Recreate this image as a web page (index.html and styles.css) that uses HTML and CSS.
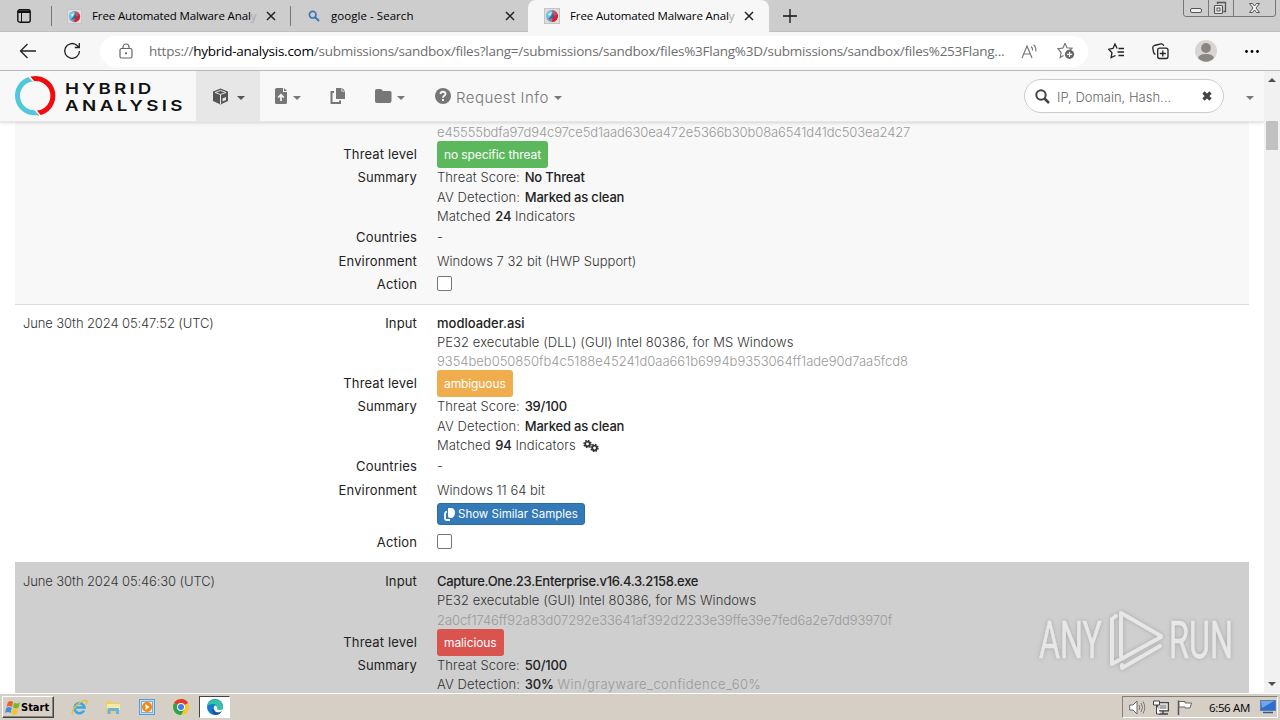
FILE: index.html
```html
<!DOCTYPE html>
<html lang="en">
<head>
    <meta charset="UTF-8">
    <meta name="viewport" content="width=device-width, initial-scale=1.0">
    <title>Free Automated Malware Analysis Service</title>
    <link rel="stylesheet" href="styles.css">
</head>
<body>

<svg class="defs" width="0" height="0">
    <defs>
        <linearGradient id="fade" x1="0" y1="0" x2="1" y2="0">
            <stop offset="0" stop-color="#58b9e8"/>
            <stop offset="1" stop-color="#e0303e"/>
        </linearGradient>
        <symbol id="favicon" viewBox="0 0 16 16">
            <rect x=".5" y=".5" width="15" height="15" fill="#dedede" stroke="#c4c4c4"/>
            <circle cx="8" cy="8" r="6" fill="url(#fade)"/>
            <path d="M8 2a6 6 0 0 0-5.500 8l5-1z" fill="#6fc6e4"/>
            <path d="M8 14a6 6 0 0 0 5.500-8l-5 3z" fill="#d6212f"/>
            <path d="M4.500 11.500L9 5l1.500 4z" fill="#31679d"/>
            <path d="M4 6l4-2-2 4z" fill="#fff" opacity=".8"/>
        </symbol>
        <symbol id="close" viewBox="0 0 10 10">
            <path d="M1 1l8 8M9 1L1 9" stroke="#222" stroke-width="1.500"/>
        </symbol>
        <symbol id="copy" viewBox="0 0 16 16">
            <path d="M6 0h5.500v3.500H15V11H6zM12.300 0L15 2.700h-2.700z" fill="currentColor"/>
            <path d="M4 4H1.500v11H10v-2.500" fill="none" stroke="currentColor" stroke-width="2"/>
        </symbol>
        <symbol id="caret" viewBox="0 0 8 4">
            <path d="M0 0h8L4 4z" fill="currentColor"/>
        </symbol>
    </defs>
</svg>

<div class="screen">
    <div class="tabs">
        <svg class="workspace" width="14" height="14" viewBox="0 0 14 14"><rect x=".8" y=".8" width="12.400" height="12.400" rx="2" fill="none" stroke="#111" stroke-width="1.400"/><path d="M1 1.500h12v2.500H1z" fill="#111"/><path d="M4.500 4v9" stroke="#111"/></svg>
        <div class="tab first">
            <svg class="fav" width="15" height="15"><use href="#favicon"/></svg>
            <span class="tab-title">Free Automated Malware Anal<i>y</i></span>
            <svg class="x" width="10" height="10"><use href="#close"/></svg>
        </div>
        <div class="tab second">
            <svg class="fav" width="12" height="12" viewBox="0 0 12 12"><circle cx="4.700" cy="4.700" r="3.300" fill="none" stroke="#3f76b5" stroke-width="1.700"/><path d="M7.200 7.200L11 11" stroke="#3f76b5" stroke-width="2"/></svg>
            <span class="tab-title search-title">google - Search</span>
            <svg class="x" width="10" height="10"><use href="#close"/></svg>
        </div>
        <div class="tab active">
            <svg class="fav" width="16" height="16"><use href="#favicon"/></svg>
            <span class="tab-title">Free Automated Malware Anal<i>y</i></span>
            <svg class="x" width="10" height="10"><use href="#close"/></svg>
        </div>
        <svg class="plus" width="14" height="14" viewBox="0 0 14 14"><path d="M7 0v14M0 7h14" stroke="#111" stroke-width="1.300"/></svg>
        <svg class="window-buttons" width="94" height="18" viewBox="0 0 94 18">
            <path d="M.5 0v14q0 2.500 2.500 2.500h87q2.500 0 2.500-2.500V0M25.500 0v16M50.500 0v16" fill="none" stroke="#777"/>
            <rect x="7.500" y="8.500" width="11" height="4" rx="1.500" fill="#eee" stroke="#555"/>
            <path d="M34.500 4V2.500h8v9h-2" fill="none" stroke="#555" stroke-width="1.300"/>
            <rect x="31.500" y="5.500" width="8" height="8" rx="1" fill="#eee" stroke="#555" stroke-width="1.200"/>
            <rect x="34" y="8" width="3" height="3" fill="none" stroke="#555"/>
            <path d="M66.500 3.500h3l2 2.500 2-2.500h3L73 8l3.500 4.500h-3l-2-2.500-2 2.500h-3L70 8z" fill="#f2f2f2" stroke="#555"/>
        </svg>
    </div>

    <div class="toolbar">
        <svg class="back" width="18" height="16" viewBox="0 0 18 16"><path d="M8.500 1L1.500 8l7 7M1.500 8H17" fill="none" stroke="#222" stroke-width="1.300"/></svg>
        <svg class="reload" width="18" height="18" viewBox="0 0 18 18"><path d="M16.500 9A7.400 7.400 0 1 1 13.500 3L16 5.200M16.300 1v4.500h-4.500" fill="none" stroke="#222" stroke-width="1.300"/></svg>
        <div class="address">
            <svg class="lock" width="14" height="16" viewBox="0 0 14 16"><rect x="1" y="5.500" width="12" height="9.500" rx="1.500" fill="none" stroke="#666" stroke-width="1.200"/><path d="M4 5.500V4a3 3 0 0 1 6 0v1.500" fill="none" stroke="#666" stroke-width="1.200"/><circle cx="7" cy="10.300" r="1.100" fill="#666"/></svg>
            <span class="url">https://<b>hybrid-analysis.com</b>/submissions/sandbox/files?lang=/submissions/sandbox/files%3Flang%3D/submissions/sandbox/files%253Flang...</span>
            <svg class="read" width="17" height="15" viewBox="0 0 17 15"><path d="M1 14L6 2l5 12M3 10h6M10 2.500q2 1.500 1.500 4M12.500.8q3 2.500 2.300 6.500" fill="none" stroke="#777" stroke-width="1.200"/></svg>
            <svg class="star" width="18" height="18" viewBox="0 0 18 18"><path d="M8 1.300l2 4.500 5 .5-3.700 3.500M6.500 13.500l-3.300 2 .9-5L1 6.800l5-.8 2-4.700" fill="none" stroke="#777" stroke-width="1.200"/><circle cx="12.500" cy="12.300" r="4.600" fill="#666"/><path d="M12.500 9.700v5.200M9.900 12.300h5.200" stroke="#fff" stroke-width="1.200"/></svg>
        </div>
        <svg class="favorites" width="17" height="16" viewBox="0 0 17 16"><path d="M9.500 5.200H9L7 1 5 5.500l-4.300.7 3.300 3.500-.9 5L7.500 12.500M10.500 5.500H16M9.500 9h6.500M10.500 12.500H16" fill="none" stroke="#222" stroke-width="1.300"/></svg>
        <svg class="collections" width="17" height="17" viewBox="0 0 17 17"><rect x="5.700" y="5.200" width="10.300" height="10.300" rx="2" fill="none" stroke="#222" stroke-width="1.300"/><path d="M3.500 11.500Q2 11 1.500 9L.8 5q-.2-2 1.500-2.500L9 .9q2-.4 2.800 2M10.800 7.500v6M7.800 10.500h6" fill="none" stroke="#222" stroke-width="1.300"/></svg>
        <svg class="avatar" width="22" height="22" viewBox="0 0 22 22"><circle cx="11" cy="11" r="11" fill="#d8d5d3"/><circle cx="11" cy="8" r="4.900" fill="#8a8683"/><path d="M3 18q1-4 8-4t8 4q-8 7.500-16 0z" fill="#8a8683"/></svg>
        <svg class="dots" width="14" height="3" viewBox="0 0 14 3"><circle cx="1.500" cy="1.500" r="1.400"/><circle cx="7" cy="1.500" r="1.400"/><circle cx="12.500" cy="1.500" r="1.400"/></svg>
    </div>

    <div class="viewport">
        <div class="page">
            <nav class="navbar">
                <svg class="logo" width="184" height="50" viewBox="0 0 184 50">
                    <path d="M31.500 8A17 17 0 0 0 37.500 41.500" fill="none" stroke="#4fc8dc" stroke-width="5"/>
                    <path d="M31.500 8A17.300 17.300 0 1 1 37.500 42" fill="none" stroke="#f00c0c" stroke-width="5"/>
                    <path d="M28 4.500l7.500 8M34.500 38l6 7" stroke="#f8f8f8" stroke-width="1.500"/>
                    <g transform="scale(1.25 1)">
                        <text x="52" y="23" textLength="69" lengthAdjust="spacing">HYBRID</text>
                        <text x="52" y="40" textLength="94" lengthAdjust="spacing">ANALYSIS</text>
                    </g>
                </svg>
                <a class="nav-item selected">
                    <svg width="17" height="17" viewBox="0 0 17 17"><path d="M8.500.5l7.500 3v9.500l-7.500 3.500L1 13V3.500z" fill="#555"/><path d="M3 4.500l5.500 2 5.500-2-5.500-2zM8.500 6.500V16" fill="none" stroke="#e7e7e7"/><path d="M10.500 10.500l3.500-1.500v3l-3.500 1.500z" fill="#e7e7e7"/></svg>
                    <svg class="caret" width="8" height="4"><use href="#caret"/></svg>
                </a>
                <a class="nav-item upload">
                    <svg width="12" height="16" viewBox="0 0 12 16"><path d="M1.500 0H8v4h4v10.500q0 1.500-1.500 1.500h-9Q0 16 0 14.500v-13Q0 0 1.500 0zM9 0l3 3H9z" fill="#777"/><path d="M6 13V7.500M3.200 9.500L6 6.700l2.800 2.800" fill="none" stroke="#f8f8f8" stroke-width="1.700"/></svg>
                    <svg class="caret" width="8" height="4"><use href="#caret"/></svg>
                </a>
                <a class="nav-item files"><svg width="16" height="16"><use href="#copy"/></svg></a>
                <a class="nav-item folder">
                    <svg width="17" height="14" viewBox="0 0 17 14"><path d="M2 0h4l2 2h7q1.500 0 1.500 1.500v8.500q0 2-2 2H2q-2 0-2-2V2q0-2 2-2z" fill="#777"/></svg>
                    <svg class="caret" width="8" height="4"><use href="#caret"/></svg>
                </a>
                <a class="nav-item request">
                    <svg width="16" height="16" viewBox="0 0 16 16"><circle cx="8" cy="8" r="8" fill="#777"/><path d="M5.500 6Q5.700 3.800 8 3.800t2.500 2q0 1.200-1.300 2Q8 8.500 8 9.800M8 11v2" fill="none" stroke="#f8f8f8" stroke-width="1.900"/></svg>
                    <span>Request Info</span>
                    <svg class="caret" width="8" height="4"><use href="#caret"/></svg>
                </a>
                <div class="search">
                    <svg width="15" height="15" viewBox="0 0 15 15"><circle cx="6" cy="6" r="4.700" fill="none" stroke="#444" stroke-width="2"/><path d="M9.500 9.500L14 14" stroke="#444" stroke-width="2.500"/></svg>
                    <span>IP, Domain, Hash...</span>
                    <svg class="clear" width="10" height="10" viewBox="0 0 10 10"><path d="M1.500 1.500l7 7M8.500 1.500l-7 7" stroke="#444" stroke-width="3.200"/></svg>
                </div>
                <svg class="caret user-caret" width="8" height="4"><use href="#caret"/></svg>
            </nav>

            <div class="entries">
                <div class="entry odd">
                    <div class="date"></div>
                    <div class="details">
                        <div class="label"></div>
                        <div class="value hash h1">e45555bdfa97d94c97ce5d1aad630ea472e5366b30b08a6541d41dc503ea2427</div>
                        <div class="label threat">Threat level</div>
                        <div class="value"><span class="badge clean">no specific threat</span></div>
                        <div class="label">Summary</div>
                        <div class="value summary">
                            <div>Threat Score: <b>No Threat</b></div>
                            <div>AV Detection: <b>Marked as clean</b></div>
                            <div>Matched <b>24</b> Indicators</div>
                        </div>
                        <div class="label row">Countries</div>
                        <div class="value row">-</div>
                        <div class="label row">Environment</div>
                        <div class="value row">Windows 7 32 bit (HWP Support)</div>
                        <div class="label row">Action</div>
                        <div class="value row"><input type="checkbox"></div>
                    </div>
                </div>

                <div class="entry">
                    <div class="date">June 30th 2024 05:47:52 (UTC)</div>
                    <div class="details">
                        <div class="label">Input</div>
                        <div class="value input-info">
                            <div><b>modloader.asi</b></div>
                            <div class="type">PE32 executable (DLL) (GUI) Intel 80386, for MS Windows</div>
                            <div class="hash h2">9354beb050850fb4c5188e45241d0aa661b6994b9353064ff1ade90d7aa5fcd8</div>
                        </div>
                        <div class="label threat">Threat level</div>
                        <div class="value"><span class="badge ambiguous">ambiguous</span></div>
                        <div class="label">Summary</div>
                        <div class="value summary">
                            <div>Threat Score: <b>39/100</b></div>
                            <div>AV Detection: <b>Marked as clean</b></div>
                            <div>Matched <b>94</b> Indicators
                                <svg class="gears" width="16" height="12" viewBox="0 0 16 12"><circle cx="4.500" cy="4" r="2.300" fill="none" stroke="#333" stroke-width="1.800"/><circle cx="4.500" cy="4" r="3.500" fill="none" stroke="#333" stroke-width="1.500" stroke-dasharray="1.500 1.250"/><circle cx="11.500" cy="8" r="2.300" fill="none" stroke="#333" stroke-width="1.800"/><circle cx="11.500" cy="8" r="3.500" fill="none" stroke="#333" stroke-width="1.500" stroke-dasharray="1.500 1.250"/></svg>
                            </div>
                        </div>
                        <div class="label row">Countries</div>
                        <div class="value row">-</div>
                        <div class="label row">Environment</div>
                        <div class="value env">
                            <div class="row">Windows 11 64 bit</div>
                            <a class="similar"><svg width="11" height="13" viewBox="0 0 11 13"><path d="M4 0h4q3 1 3 4.500T8 10H6Q4 10 4 8z" fill="#fff"/><path d="M3 3.500Q1 4 1 6.500v4q0 1.500 1.500 1.500H6" fill="none" stroke="#fff" stroke-width="1.800"/></svg>Show Similar Samples</a>
                        </div>
                        <div class="label row">Action</div>
                        <div class="value row"><input type="checkbox"></div>
                    </div>
                </div>

                <div class="entry dark">
                    <div class="date">June 30th 2024 05:46:30 (UTC)</div>
                    <div class="details">
                        <div class="label">Input</div>
                        <div class="value input-info">
                            <div class="long-name"><b>Capture.One.23.Enterprise.v16.4.3.2158.exe</b></div>
                            <div class="type">PE32 executable (GUI) Intel 80386, for MS Windows</div>
                            <div class="hash h3">2a0cf1746ff92a83d07292e33641af392d2233e39ffe39e7fed6a2e7dd93970f</div>
                        </div>
                        <div class="label threat">Threat level</div>
                        <div class="value"><span class="badge malicious">malicious</span></div>
                        <div class="label">Summary</div>
                        <div class="value summary">
                            <div>Threat Score: <b>50/100</b></div>
                            <div>AV Detection: <b>30%</b> <span class="family">Win/grayware_confidence_60%</span></div>
                        </div>
                    </div>
                </div>
            </div>
        </div>
        <div class="scrollbar">
            <svg width="8" height="4" viewBox="0 0 8 4"><path d="M0 4h8L4 0z" fill="#505050"/></svg>
            <div class="thumb"></div>
            <svg width="8" height="4" viewBox="0 0 8 4"><path d="M0 0h8L4 4z" fill="#505050"/></svg>
        </div>
        <svg class="watermark" width="220" height="70" viewBox="0 0 220 70">
            <g fill="#f0f0f0" stroke="#f0f0f0" stroke-width=".6" font-size="52">
                <text x="2" y="50" textLength="63" lengthAdjust="spacingAndGlyphs">ANY</text>
                <text x="132" y="50" textLength="64" lengthAdjust="spacingAndGlyphs">RUN</text>
            </g>
            <path d="M84 48V5l40 23M75 11v45l49-27M85 57v3l38-22M75 11l4-3" fill="none" stroke="#efefef" stroke-width="4" stroke-linecap="round" stroke-linejoin="round"/>
        </svg>
    </div>

    <div class="taskbar">
        <div class="start">
            <svg width="16" height="15" viewBox="0 0 16 15"><path d="M3 2q3-2 5 0L7 7Q4 5 1.500 7z" fill="#e8622c"/><path d="M9 2.500q3 2 6 0L13.500 7.500q-3 2-5.500 0z" fill="#76b82a"/><path d="M1.300 8q3-2 5.500 0L5.500 13Q3 11 0 13z" fill="#3d8ee0"/><path d="M7.800 8.500q2.500 2 5.500 0L12 13.500q-3 2-5.500 0z" fill="#f8c31c"/></svg>
            <span>Start</span>
        </div>
        <svg class="task ie" width="17" height="17" viewBox="0 0 17 17"><path d="M13 11.500A5 5 0 1 1 13.500 8.500H5" fill="none" stroke="#39a9e2" stroke-width="2.600"/><path d="M2 15Q-.5 13 5 7T15.500 1.500Q17 2.500 15 5.500" fill="none" stroke="#e8bf3c" stroke-width="1.400"/></svg>
        <svg class="task explorer" width="16" height="15" viewBox="0 0 16 15"><path d="M1 1h5l1 1.500h7V13H1z" fill="#e9cd70"/><path d="M2 4h13v6H2z" fill="#f8e9a5"/><path d="M2.500 14V9q0-1 1-1h9.500q1 0 1 1v5h-3v-3H5.500v3z" fill="#6bb5dc"/></svg>
        <svg class="task player" width="16" height="16" viewBox="0 0 16 16"><rect x=".5" y=".5" width="15" height="15" fill="#c3dcf0" stroke="#5b9bd0"/><rect x="2.500" y="2.500" width="11" height="11" fill="#e6f1fa" stroke="#79aeda"/><circle cx="8" cy="8" r="5" fill="#f58610"/><path d="M6.500 5l4 3-4 3z" fill="#fff"/></svg>
        <svg class="task chrome" width="16" height="16" viewBox="0 0 16 16"><circle cx="8" cy="8" r="8" fill="#f7c922"/><path d="M8 8L1.100 4A8 8 0 0 1 14.900 4z" fill="#e33b2e"/><path d="M8 8L1.100 4A8 8 0 0 0 8 16l3.500-6z" fill="#2da34c"/><path d="M8 4h6.900A8 8 0 0 0 8 0z" fill="#e33b2e"/><circle cx="8" cy="8" r="4" fill="#fff"/><circle cx="8" cy="8" r="3" fill="#3d7ee8"/></svg>
        <div class="edge">
            <svg width="16" height="16" viewBox="0 0 16 16"><circle cx="8" cy="8" r="8" fill="#137bc9"/><path d="M.2 7A8 8 0 0 1 16 7.500q0 3.500-3.500 3.500-3 0-2.500-2 .5-4-4-4Q2 5 .2 7z" fill="#35c3a8"/><path d="M6.500 8.500Q6 13 10.500 13.500q2 .2 4-1 -2 3.500-6.500 3.500Q3 13 6.500 8.500z" fill="#1555a4"/><path d="M10 9q.5-2-2-2.500-2 1-1 4 1.500 3.500 6 2.500l2-1.200.5-1.500q-1.500.9-3.500.7-2.300-.2-2-2z" fill="#fff"/></svg>
        </div>
        <div class="tray">
            <svg class="sound" width="17" height="15" viewBox="0 0 17 15"><path d="M.7 5H4l4-4v13l-4-4H.7z" fill="#fff" stroke="#666"/><path d="M10 5q1.500 2.500 0 5M12 3q3 4.500 0 9M14 1.500q3.500 6 0 12" fill="none" stroke="#777"/></svg>
            <svg class="network" width="16" height="15" viewBox="0 0 16 15"><rect x="4.500" y="2.500" width="11" height="8.500" fill="#888" stroke="#444"/><rect x="6" y="4" width="8" height="5.500" fill="#aaa" stroke="#fff"/><path d="M6 14h9M10 11v3" stroke="#444" stroke-width="1.500"/><path d="M.5 1h6v4h-6zM3.500 5v9h4" fill="#fff" stroke="#444"/></svg>
            <svg class="flag" width="16" height="15" viewBox="0 0 16 15"><path d="M1.500 15V.5" stroke="#555" stroke-width="1.500"/><path d="M2 1.500h6v1.500h6.500l-1.500 5H8V7H2z" fill="#fff" stroke="#666"/></svg>
            <span>6:56 AM</span>
            <svg class="desktop" width="16" height="14" viewBox="0 0 16 14"><rect x=".5" y=".5" width="15" height="10" fill="#2d6ed1" stroke="#5f7fa6"/><path d="M1 1h13L2 8z" fill="#72a5ea"/><path d="M3 12.500h10" stroke="#36598d" stroke-width="1.500"/></svg>
        </div>
    </div>
</div>

</body>
</html>
```
FILE: styles.css
```css
* {
    box-sizing: border-box;
}
body {
    margin: 0;
    font-family: Inter, "Liberation Sans", sans-serif;
    overflow: hidden;
}
svg {
    display: block;
    flex: none;
}
.defs {
    position: absolute;
}
.screen {
    width: 1280px;
    height: 720px;
    display: flex;
    flex-direction: column;
    background: #fff;
}

/* browser tabs */
.tabs {
    height: 32px;
    flex: none;
    display: flex;
    background: #cdcdcd;
    box-shadow: inset 0 -1px #c0c0c0;
    font: 12px "Open Sans", "Noto Sans", sans-serif;
}
.workspace {
    margin: 9px 20px 0 17px;
}
.tab {
    display: flex;
    align-items: center;
    position: relative;
    height: 32px;
}
.tab-title {
    color: #000;
    font-size: 11.5px;
    letter-spacing: -0.13px;
    line-height: 16px;
    margin-top: -1px;
    white-space: nowrap;
    width: 166px;
    overflow: hidden;
}
.tab-title i {
    font-style: normal;
    color: #aaa;
}
.search-title {
    letter-spacing: .05px;
}
.first,
.second {
    border-left: 1px solid #777;
    height: 20px;
    margin-top: 6px;
}
.first {
    width: 239px;
    padding-left: 15px;
}
.second {
    width: 238px;
    padding-left: 17px;
}
.first .fav {
    margin-right: 10px;
}
.second .fav {
    margin-right: 11px;
}
.tab .x {
    margin-left: 8px;
}
.active {
    width: 241px;
    background: #f7f7f7;
    border-radius: 8px 8px 0 0;
    padding-left: 16px;
}
.active .fav {
    margin-right: 10px;
}
.plus {
    margin: 9px 0 0 14px;
}
.window-buttons {
    margin: 0 3px 0 auto;
}

/* address bar */
.toolbar {
    height: 39px;
    flex: none;
    display: flex;
    align-items: center;
    background: #f7f7f7;
    border-bottom: 1px solid #b8b8b8;
}
.back {
    margin-left: 19px;
}
.reload {
    margin-left: 26px;
}
.address {
    width: 988px;
    height: 31px;
    margin-left: 19px;
    display: flex;
    align-items: center;
    border-radius: 16px;
    background: #fff;
}
.lock {
    margin-left: 19px;
}
.url {
    width: 857px;
    margin-left: 16px;
    font: 13.5px "Open Sans", "Noto Sans", sans-serif;
    letter-spacing: -.24px;
    color: #6e6e6e;
    white-space: nowrap;
}
.url b {
    font-weight: normal;
    color: #000;
}
.read {
    margin-left: 15px;
}
.star {
    margin-left: 19px;
}
.favorites {
    margin-left: 20px;
}
.collections {
    margin-left: 27px;
}
.avatar {
    margin-left: 26px;
}
.dots {
    margin-left: 28px;
}

/* page */
.viewport {
    height: 622px;
    flex: none;
    display: flex;
    position: relative;
    overflow: hidden;
}
.page {
    width: 1264px;
    overflow: hidden;
    display: flex;
    flex-direction: column;
}
.navbar {
    height: 51px;
    flex: none;
    display: flex;
    align-items: center;
    position: relative;
    background: #f8f8f8;
    border-bottom: 1px solid #e7e7e7;
    box-shadow: 0 1px 3px rgba(0, 0, 0, .15);
    color: #777;
}
.logo text {
    font: 600 15px Inter, sans-serif;
    fill: #111;
}
.nav-item {
    display: flex;
    align-items: center;
    height: 50px;
}
.caret {
    color: #777;
    position: relative;
    top: 2px;
    margin-left: 8px;
}
.selected {
    width: 64px;
    margin-left: 12px;
    padding-left: 16px;
    background: #e7e7e7;
}
.selected .caret {
    color: #555;
}
.upload {
    margin-left: 15px;
}
.upload .caret {
    margin-left: 6px;
}
.files {
    margin-left: 29px;
}
.folder {
    margin-left: 29px;
}
.folder .caret {
    margin-left: 5px;
}
.request {
    margin-left: 30px;
}
.request span {
    font-size: 15px;
    font-weight: 300;
    margin: 2px 0 0 5px;
    letter-spacing: .45px;
}
.request .caret {
    margin-left: 5px;
}
.search {
    width: 200px;
    height: 34px;
    margin-left: auto;
    padding-left: 10px;
    display: flex;
    align-items: center;
    border: 1px solid #ccc;
    border-radius: 17px;
    background: #fff;
}
.search span {
    width: 138px;
    margin: 2px 0 0 7px;
    font-size: 13px;
    font-weight: 300;
    color: #666;
}
.clear {
    margin-left: 7px;
}
.user-caret {
    margin: 0 10px 0 22px;
}
.entries {
    padding: 0 15px;
}
.entry {
    display: flex;
    padding: 9px 0 8px;
    border-top: 1px solid #ddd;
    font-size: 13px;
    font-weight: 300;
    line-height: 19.33px;
    color: #333;
}
.odd {
    height: 182px;
    padding-top: 1px;
    border-top: 0;
    background: #f8f8f8;
}
.dark {
    background: #cfcfcf;
    border-color: #cfcfcf;
}
.date {
    width: 300px;
    padding-left: 8px;
    letter-spacing: -.12px;
}
.details {
    width: 934px;
    display: grid;
    grid-template-columns: 102px 1fr;
    align-content: start;
    column-gap: 20px;
}
.label {
    text-align: right;
    font-weight: 400;
    color: #222;
    letter-spacing: .15px;
}
.value {
    white-space: nowrap;
}
.value b {
    font-weight: 500;
    color: #222;
}
.input-info {
    height: 57.4px;
    line-height: 19.2px;
}
.type {
    letter-spacing: .08px;
}
.long-name {
    letter-spacing: -.29px;
}
.hash {
    color: #999;
}
.h1 {
    letter-spacing: -.11px;
}
.h2 {
    letter-spacing: -.02px;
}
.h3 {
    letter-spacing: -.08px;
}
.threat {
    line-height: 25px;
}
.summary {
    letter-spacing: .1px;
}
.summary b {
    letter-spacing: -.18px;
    margin-left: 1px;
}
.row {
    height: 23.4px;
    line-height: 23.4px;
}
.badge {
    display: block;
    width: max-content;
    height: 27px;
    margin-top: -1px;
    padding: 0 7px;
    border-radius: 3px;
    color: #fff;
    font-size: 12px;
    font-weight: 400;
    line-height: 28px;
    letter-spacing: -.1px;
}
.clean {
    background: #5cb85c;
}
.ambiguous {
    background: #f0ad4e;
}
.malicious {
    background: #d9534f;
}
.gears {
    display: inline-block;
    margin-left: 3px;
    vertical-align: -2px;
}
.env {
    height: 52px;
}
.similar {
    display: flex;
    align-items: center;
    width: 148px;
    height: 22px;
    margin-top: 1px;
    padding: 1px 0 0 6px;
    gap: 3px;
    border: 1px solid #2e6da4;
    border-radius: 3px;
    background: #337ab7;
    color: #fff;
    font-size: 11.5px;
    font-weight: 400;
}
input {
    display: block;
    appearance: none;
    width: 15px;
    height: 15px;
    margin: 3px 0 0;
    border: 1px solid #767676;
    border-radius: 2px;
    background: #fff;
}
.family {
    color: #999;
    letter-spacing: .46px;
}

.scrollbar {
    width: 16px;
    display: flex;
    flex-direction: column;
    align-items: center;
    padding: 7px 0;
    background: #f1f1f1;
}
.thumb {
    width: 12px;
    height: 29px;
    margin: 39px 0 auto;
    background: #c1c1c1;
}
.watermark {
    position: absolute;
    left: 1037px;
    top: 537px;
    font-family: Roboto, sans-serif;
    opacity: .75;
    filter: drop-shadow(0 0 2px #999);
}

/* taskbar */
.taskbar {
    height: 27px;
    display: flex;
    align-items: center;
    background: #d6cfc6;
    border-top: 1px solid #fff;
}
.start {
    width: 52px;
    height: 22px;
    margin-left: 2px;
    padding-left: 2px;
    display: flex;
    align-items: center;
    border: 1px solid #fff;
    border-right-color: #444;
    border-bottom-color: #444;
    box-shadow: inset -1px -1px #8a857c;
    font: bold 11px "DejaVu Sans Condensed", "DejaVu Sans", sans-serif;
}
.ie {
    margin-left: 17px;
}
.explorer {
    margin-left: 17px;
}
.player {
    margin-left: 18px;
}
.chrome {
    margin-left: 18px;
}
.edge {
    width: 31px;
    height: 22px;
    margin-left: 10px;
    display: flex;
    align-items: center;
    justify-content: center;
    border: 1px solid #fff;
    border-top-color: #444;
    border-left-color: #444;
    background: #fff;
}
.tray {
    width: 156px;
    height: 22px;
    margin: 0 2px 0 auto;
    padding-left: 6px;
    display: flex;
    align-items: center;
    border: 1px solid #fff;
    border-top-color: #85807a;
    border-left-color: #85807a;
    font: 11.5px "Open Sans", sans-serif;
}
.network {
    margin-left: 7px;
}
.flag {
    margin-left: 8px;
}
.tray span {
    width: 41px;
    margin-left: 16px;
    letter-spacing: -.35px;
    white-space: nowrap;
}
.desktop {
    margin-left: 10px;
}
```
